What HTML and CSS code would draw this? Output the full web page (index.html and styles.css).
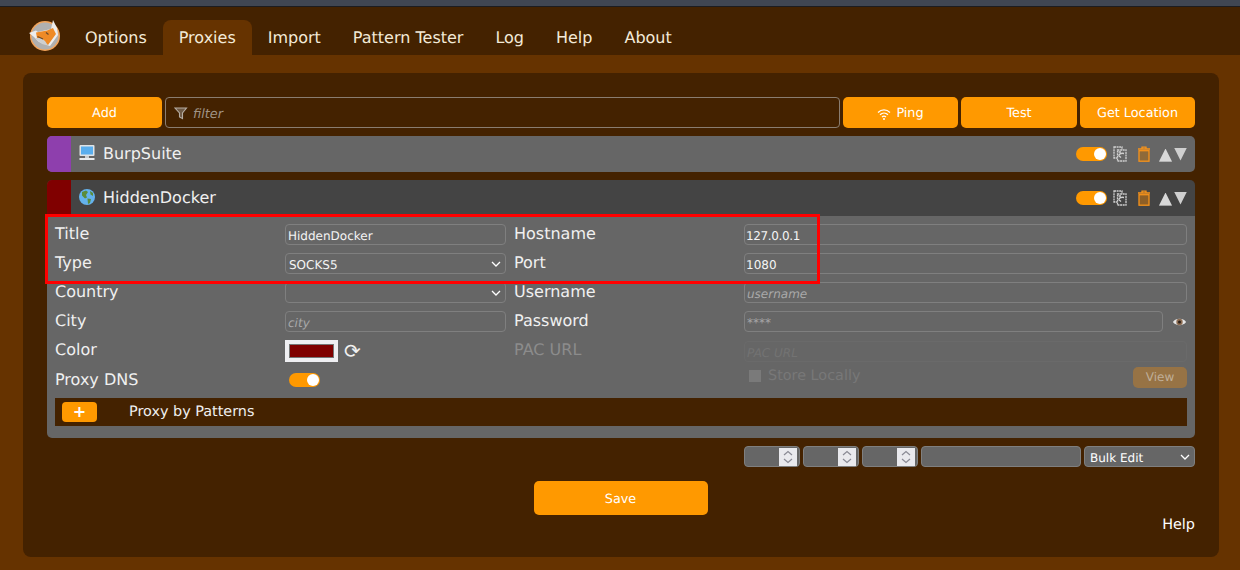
FILE: index.html
```html
<!DOCTYPE html>
<html lang="en">
<head>
<meta charset="utf-8">
<title>FoxyProxy Options</title>
<link rel="stylesheet" href="styles.css">
</head>
<body>
<div class="topstrip"></div>
<nav class="nav">
  <svg class="logo" width="36" height="36" viewBox="0 0 36 36">
    <circle cx="18" cy="18" r="15" fill="#f3a45a"/>
    <circle cx="18" cy="18" r="13.500" fill="#b0b0b0"/>
    <path d="M2 15 L9 12.500 L11 14 L24 11 L26 2 L30 10 L31 17 L23 28 L20 27 L12 24 L7 19 Z" fill="#ededed"/>
    <path d="M9 14.500 L20 12.500 L26 10 L29 16 L21 27 L15 24.500 L10 20 Z" fill="#ef8a26"/>
    <path d="M8 20 L14 20 L18 23 L21 27.500 L15 26 Z" fill="#cfcfcf"/>
    <path d="M10.500 18.500 L16 21 M19 14.500 L21.500 16.500" stroke="#6b4a2a" stroke-width="1.300" fill="none"/>
  </svg>
  <a class="tab">Options</a>
  <a class="tab tab-active">Proxies</a>
  <a class="tab">Import</a>
  <a class="tab">Pattern Tester</a>
  <a class="tab">Log</a>
  <a class="tab">Help</a>
  <a class="tab">About</a>
</nav>
<main class="page">
  <section class="panel">
    <div class="toolbar">
      <button class="btn btn-add">Add</button>
      <label class="filter">
        <svg class="filter-icon" width="14" height="14" viewBox="0 0 14 14"><path d="M1 2 H12.500 L8.500 7 V12.500 L5.500 11 V7 Z" fill="#6e5a46" stroke="#b5aca2" stroke-width="1.100"/></svg>
        <input class="filter-input" type="text" placeholder="filter">
      </label>
      <button class="btn btn-ping">
        <svg width="14" height="14" viewBox="0 0 14 14" fill="none" stroke="#fff" stroke-width="1.200"><path d="M1 5.500 C4.500 2 9.500 2 13 5.500 M3 7.800 C5.300 5.600 8.700 5.600 11 7.800 M5 10 C6.200 9 7.800 9 9 10"/><circle cx="7" cy="12" r="1" fill="#fff" stroke="none"/></svg>
        Ping
      </button>
      <button class="btn btn-test">Test</button>
      <button class="btn btn-loc">Get Location</button>
    </div>

    <div class="proxy">
      <div class="proxy-head">
        <span class="swatch swatch-purple"></span>
        <svg class="kind" width="18" height="18" viewBox="0 0 18 18">
          <rect x="1.500" y="1" width="15" height="11" rx="1" fill="#dfe3e6"/>
          <rect x="3" y="2.500" width="12" height="8" fill="#5aaeee"/>
          <rect x="7" y="12" width="4" height="2" fill="#c9cdd0"/>
          <rect x="1.500" y="14" width="15" height="2" fill="#e8eaec"/>
        </svg>
        <span class="proxy-name">BurpSuite</span>
        <span class="actions">
          <span class="toggle"></span>
          <svg class="copy" width="14" height="16" viewBox="0 0 14 16" fill="none" stroke="#d0d0d0" stroke-width="1.300"><rect x="1" y="1" width="8" height="11" stroke-dasharray="2 .6"/><rect x="4.500" y="4" width="8.500" height="11" fill="#666" stroke-dasharray="2 .6"/><path d="M5.500 9.500 C6.500 7.500 9 7 11 7.500 M5.500 9.500 L8 11.500 M5.500 6 H8" stroke-width="1.300"/></svg>
          <svg class="trash" width="14" height="16" viewBox="0 0 14 16"><path d="M1 3 H13 M5 3 V1.200 H9 V3" fill="none" stroke="#f7931a" stroke-width="1.300"/><rect x="2" y="4.700" width="10" height="10.500" fill="#8e6a3a" stroke="#f7931a" stroke-width="1.300"/></svg>
          <span class="tri tri-up"></span>
          <span class="tri tri-down"></span>
        </span>
      </div>
    </div>

    <div class="proxy proxy-open">
      <div class="proxy-head proxy-head-dark">
        <span class="swatch swatch-red"></span>
        <svg class="kind" width="18" height="18" viewBox="0 0 18 18">
          <circle cx="9" cy="9" r="8" fill="#64b2ec"/>
          <path d="M4 4 L8 2.500 L10 4 L8 7 L9 9.500 L7 10.500 L4 7.500 Z M9.500 10.500 L13 11 L12 15 L10 16 Z M12 3 L15 5 L15 8 L12.500 6.500 Z" fill="#5b8c3a"/>
        </svg>
        <span class="proxy-name">HiddenDocker</span>
        <span class="actions">
          <span class="toggle"></span>
          <svg class="copy" width="14" height="16" viewBox="0 0 14 16" fill="none" stroke="#d0d0d0" stroke-width="1.300"><rect x="1" y="1" width="8" height="11" stroke-dasharray="2 .6"/><rect x="4.500" y="4" width="8.500" height="11" fill="#444" stroke-dasharray="2 .6"/><path d="M5.500 9.500 C6.500 7.500 9 7 11 7.500 M5.500 9.500 L8 11.500 M5.500 6 H8" stroke-width="1.300"/></svg>
          <svg class="trash" width="14" height="16" viewBox="0 0 14 16"><path d="M1 3 H13 M5 3 V1.200 H9 V3" fill="none" stroke="#f7931a" stroke-width="1.300"/><rect x="2" y="4.700" width="10" height="10.500" fill="#8e5f26" stroke="#f7931a" stroke-width="1.300"/></svg>
          <span class="tri tri-up"></span>
          <span class="tri tri-down"></span>
        </span>
      </div>
      <div class="proxy-body">
        <form class="form">
          <span class="lbl">Title</span>
          <input class="field field-a" type="text" value="HiddenDocker">
          <span class="lbl">Hostname</span>
          <input class="field field-num field-host" type="text" value="127.0.0.1">

          <span class="lbl">Type</span>
          <span class="select-wrap field-a">
            <select class="field field-select"><option>SOCKS5</option></select>
            <svg class="chev" width="10" height="6" viewBox="0 0 10 6" fill="none" stroke="#fff" stroke-width="1.300"><path d="M1 1 L5 5 L9 1"/></svg>
          </span>
          <span class="lbl">Port</span>
          <input class="field field-num" type="text" value="1080">

          <span class="lbl">Country</span>
          <span class="select-wrap field-a">
            <select class="field field-select"><option></option></select>
            <svg class="chev" width="10" height="6" viewBox="0 0 10 6" fill="none" stroke="#fff" stroke-width="1.300"><path d="M1 1 L5 5 L9 1"/></svg>
          </span>
          <span class="lbl">Username</span>
          <input class="field" type="text" placeholder="username">

          <span class="lbl">City</span>
          <input class="field field-a" type="text" placeholder="city">
          <span class="lbl">Password</span>
          <span class="pw">
            <input class="field pw-input" type="text" placeholder="****">
            <svg width="15" height="10" viewBox="0 0 16 10"><path d="M1 5 C4 0.500 12 0.500 15 5 C12 9.500 4 9.500 1 5 Z" fill="#e6e6e6"/><circle cx="8" cy="5" r="3.400" fill="#8a6a50"/><circle cx="8" cy="5" r="1.600" fill="#2c2018"/></svg>
          </span>

          <span class="lbl">Color</span>
          <span class="color-cell">
            <span class="color-box"><span class="color-fill"></span></span>
            <span class="refresh">⟳</span>
          </span>
          <span class="lbl lbl-dim">PAC URL</span>
          <input class="field field-dim" type="text" placeholder="PAC URL">

          <span class="lbl lbl-dns">Proxy DNS</span>
          <span class="dns-cell"><span class="toggle"></span></span>
          <span class="spacer"></span>
          <span class="store">
            <span class="check"></span>
            <span class="store-text">Store Locally</span>
            <button class="view" type="button">View</button>
          </span>
        </form>
        <div class="patterns">
          <button class="plus" type="button">+</button>
          <span class="patterns-text">Proxy by Patterns</span>
        </div>
      </div>
    </div>

    <div class="bulk">
      <span class="num-wrap">
        <input class="num" type="text">
        <span class="spin"><svg width="10" height="14" viewBox="0 0 10 14" fill="none" stroke="#8a8a94" stroke-width="1.200"><path d="M1 5 L5 1.500 L9 5 M1 9 L5 12.500 L9 9"/></svg></span>
      </span>
      <span class="num-wrap">
        <input class="num" type="text">
        <span class="spin"><svg width="10" height="14" viewBox="0 0 10 14" fill="none" stroke="#8a8a94" stroke-width="1.200"><path d="M1 5 L5 1.500 L9 5 M1 9 L5 12.500 L9 9"/></svg></span>
      </span>
      <span class="num-wrap">
        <input class="num" type="text">
        <span class="spin"><svg width="10" height="14" viewBox="0 0 10 14" fill="none" stroke="#8a8a94" stroke-width="1.200"><path d="M1 5 L5 1.500 L9 5 M1 9 L5 12.500 L9 9"/></svg></span>
      </span>
      <input class="bulk-text" type="text">
      <span class="select-wrap bulk-wrap">
        <select class="bulk-select"><option>Bulk Edit</option></select>
        <svg class="chev" width="10" height="6" viewBox="0 0 10 6" fill="none" stroke="#fff" stroke-width="1.300"><path d="M1 1 L5 5 L9 1"/></svg>
      </span>
    </div>
    <div class="save-row"><button class="btn btn-save">Save</button></div>
    <div class="help-row"><a class="help">Help</a></div>
  </section>
</main>
<div class="highlight"></div>
</body>
</html>
```
FILE: styles.css
```css
* { box-sizing: border-box; }
html, body { margin: 0; padding: 0; height: 570px; overflow: hidden; }
body {
  background: #663300;
  color: #fff;
  font-family: "DejaVu Sans", sans-serif;
  font-size: 14px;
  text-rendering: geometricPrecision;
}
input, select, button { text-rendering: geometricPrecision; }
.topstrip { height: 7px; background: #404652; border-bottom: 1px solid #1c1c20; }
.nav {
  height: 48px;
  background: #442200;
  display: flex;
  align-items: flex-end;
  padding-left: 27px;
}
.logo { align-self: flex-start; margin-top: 11px; margin-right: 6px; flex: none; width: 36px; height: 36px; }
.tab {
  height: 35px;
  padding: 0 16px;
  line-height: 36px;
  font-size: 16px;
  color: #f3ead8;
  border-radius: 8px 8px 0 0;
}
.tab-active { background: #663300; }

.page { padding: 18px 21px 0 23px; }
.panel {
  height: 484px;
  background: #442200;
  border-radius: 8px;
  padding: 24px 24px 0;
}
.toolbar { display: flex; gap: 3px; height: 31px; }
.btn {
  border: 0;
  border-radius: 5px;
  background: #ff9900;
  color: #fff;
  font-family: inherit;
  font-size: 12.800px;
  padding: 2px 0 0;
  display: flex;
  align-items: center;
  justify-content: center;
  gap: 5px;
}
.btn-add { width: 115px; }
.btn-ping { width: 115px; }
.btn-test { width: 116px; }
.btn-loc { width: 115px; }
.filter {
  flex: 1;
  display: flex;
  align-items: center;
  gap: 5px;
  padding-left: 8px;
  border: 1px solid #8a7d70;
  border-radius: 4px;
}
.filter-icon { flex: none; }
.filter-input {
  flex: 1;
  border: 0;
  background: transparent;
  font: italic 12.800px "DejaVu Sans", sans-serif;
  color: #fff;
  outline: 0;
  padding: 3px 0 0;
}
.filter-input::placeholder { color: #a09486; opacity: 1; }

.proxy { margin-top: 8px; border-radius: 5px; overflow: hidden; }
.proxy-head {
  height: 36px;
  background: #666;
  display: flex;
  align-items: center;
}
.proxy-head-dark { background: #444; }
.swatch { width: 24px; height: 36px; flex: none; margin-right: 7px; }
.swatch-purple { background: #8e3fad; }
.swatch-red { background: #800000; }
.kind { flex: none; margin-right: 7px; margin-top: -2px; }
.proxy-name { font-size: 16px; color: #f0f0f0; margin-top: -1px; flex: 1; }
.actions { display: flex; align-items: center; padding-right: 8px; height: 36px; margin-top: -1px; }
.toggle {
  position: relative;
  display: block;
  width: 31px;
  height: 14px;
  border-radius: 7px;
  background: #ff9900;
  flex: none;
}
.toggle::after {
  content: "";
  position: absolute;
  right: 1px;
  top: 1px;
  width: 12px;
  height: 12px;
  border-radius: 50%;
  background: #fff;
}
.copy { margin-left: 6px; flex: none; }
.trash { margin-left: 10px; flex: none; }
.tri { width: 13px; height: 13px; flex: none; }
.tri-up {
  margin-left: 8px;
  margin-top: 3px;
  background: linear-gradient(#d8d8d8 92%, #fff 92%);
  clip-path: polygon(50% 0, 100% 100%, 0 100%);
}
.tri-down {
  margin-left: 2px;
  margin-top: 1px;
  background: #cfcfcf;
  clip-path: polygon(0 0, 100% 0, 50% 100%);
}

.proxy-body { background: #666; height: 222px; padding: 8px 8px 0; }
.form {
  display: grid;
  grid-template-columns: 230px 229px 230px 443px;
  grid-auto-rows: 29px;
  align-items: start;
  font-size: 16px;
}
.lbl { line-height: 19px; color: #f0f0f0; }
.lbl-dim { color: #8c8c8c; }
.lbl-dns { margin-top: 1px; }
.field {
  display: block;
  width: 100%;
  height: 21px;
  border: 1px solid #7f7f7f;
  border-radius: 4px;
  background: transparent;
  color: #f4f4f4;
  font: 12px "DejaVu Sans", sans-serif;
  padding: 2px 2px 0;
  outline: 0;
}
.field::placeholder { color: #a9a9a9; font-style: italic; opacity: 1; }
.field-a { width: 221px; }
.field-num { padding-left: 1px; }
.field-host { letter-spacing: -.35px; }
.field-select { appearance: none; padding-left: 3px; }
.field-select option { color: #000; }
.select-wrap { position: relative; display: block; }
.chev { position: absolute; right: 5px; top: 8px; }
.pw { display: flex; align-items: center; }
.pw-input { flex: 1; width: auto; }
.pw svg { margin-left: 9px; flex: none; }
.field-dim { border-color: #6a6a6a; margin-top: 1px; }
.field-dim::placeholder { color: #737373; }
.color-cell { display: flex; align-items: center; height: 22px; }
.color-box {
  display: block;
  width: 53px;
  height: 22px;
  background: #efeff2;
  padding: 4px;
}
.color-fill { display: block; height: 14px; background: #800000; border: 1px solid #767676; }
.refresh { margin-left: 6px; font-size: 20px; line-height: 22px; color: #f0f0f0; }
.dns-cell { display: block; padding: 4px 0 0 4px; }
.spacer { display: block; }
.store {
  display: flex;
  align-items: center;
  margin-top: -5px;
  height: 24px;
  color: #787878;
  font-size: 14.400px;
}
.check { width: 12px; height: 12px; background: #7a7a7a; margin-left: 5px; margin-right: 7px; flex: none; }
.store-text { flex: 1; }
.view {
  width: 54px;
  height: 21px;
  border: 0;
  border-radius: 5px;
  background: #977345;
  color: #bfae98;
  font: 12px "DejaVu Sans", sans-serif;
  padding: 0;
  margin-top: 2px;
}
.patterns {
  height: 28px;
  background: #442200;
  display: flex;
  align-items: center;
  padding-left: 7px;
}
.plus {
  width: 35px;
  height: 20px;
  border: 0;
  border-radius: 4px;
  background: #ff9900;
  color: #fff;
  font: bold 16px "DejaVu Sans", sans-serif;
  line-height: 18px;
  padding: 0;
}
.patterns-text { margin-left: 32px; font-size: 14.400px; color: #f0f0f0; }

.bulk {
  display: flex;
  justify-content: flex-end;
  gap: 3px;
  height: 21px;
  margin-top: 8px;
}
.num-wrap {
  display: flex;
  align-items: center;
  width: 56px;
  height: 21px;
  background: #666;
  border: 1px solid #7f7f7f;
  border-radius: 4px;
  padding-right: 2px;
}
.num {
  flex: 1;
  min-width: 0;
  height: 100%;
  border: 0;
  background: transparent;
  padding: 0;
  outline: 0;
}
.spin {
  width: 18px;
  height: 18px;
  background: #e9e9ed;
  display: flex;
  align-items: center;
  justify-content: center;
  flex: none;
}
.bulk-text, .bulk-select {
  height: 21px;
  background: #666;
  border: 1px solid #7f7f7f;
  border-radius: 4px;
  color: #fff;
  outline: 0;
  font: 12px "DejaVu Sans", sans-serif;
}
.bulk-text { width: 160px; }
.bulk-wrap { width: 111px; }
.bulk-select { width: 100%; appearance: none; padding: 2px 0 0 5px; }
.bulk-select option { color: #000; }
.save-row { display: flex; justify-content: center; margin-top: 14px; padding-right: 1px; }
.btn-save { width: 174px; height: 34px; padding-top: 3px; }
.help-row { display: flex; justify-content: flex-end; padding-top: 1px; }
.help { font-size: 14.400px; color: #fff; line-height: 18px; }
.highlight {
  position: absolute;
  left: 45px;
  top: 214px;
  width: 775px;
  height: 70px;
  border: 3px solid #f00;
  pointer-events: none;
}
```
